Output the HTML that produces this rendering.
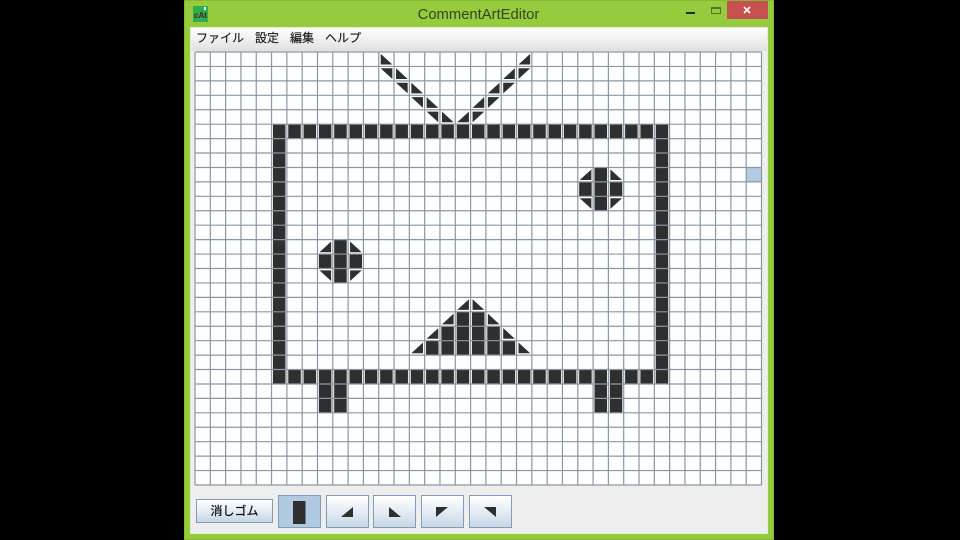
<!DOCTYPE html>
<html lang="ja">
<head>
<meta charset="utf-8">
<title>CommentArtEditor</title>
<style>
html,body{margin:0;padding:0;background:#000;width:960px;height:540px;overflow:hidden}
body{position:relative;font-family:"Liberation Sans","Noto Sans CJK JP",sans-serif}
.abs,.win,.client,.menu,.m,.btn,.title{position:absolute}
.win{left:184px;top:0;width:590px;height:540px;background:#95cb3d;box-sizing:border-box;border:1px solid #86b838}
.title{left:184px;width:589px;top:7px;text-align:center;font-size:14.8px;line-height:17px;color:#36452a}
.client{left:191px;top:28px;width:576px;height:505px;background:#eeeeee;outline:1px solid #e2eed0}
.menu{left:191px;top:28px;width:576px;height:23px;background:linear-gradient(#ffffff,#e0e0e0)}
.m{top:29.500px;font-size:12px;line-height:16px;color:#1a1a1a;white-space:nowrap;-webkit-text-stroke:.15px #1a1a1a}
.btn{box-sizing:border-box;border:1px solid #7f9db9;background:linear-gradient(#ffffff,#dfe8f2 60%,#c6d5e5)}
.sel{background:#b2c9e2}
</style>
</head>
<body>
<div class="win"></div>
<svg class="abs" style="left:193px;top:6px" width="15" height="16" viewBox="0 0 15 16">
<rect width="15" height="16" fill="#2fae4e"/>
<text x="1" y="12" font-family="Liberation Sans" font-size="8" font-weight="bold" fill="#5a1c1c">cAt</text>
<rect x="11" y="1" width="2" height="3" fill="#fff"/>
</svg>
<div class="title">CommentArtEditor</div>
<div class="abs" style="left:686px;top:12px;width:9px;height:2px;background:#1f2a18"></div>
<div class="abs" style="left:711px;top:7px;width:8px;height:4px;border:1px solid #54762a;border-top-width:2px"></div>
<div class="abs" style="left:727px;top:1px;width:41px;height:18px;background:#c75050"></div>
<svg class="abs" style="left:727px;top:1px" width="41" height="18" viewBox="0 0 41 18"><path d="M17 6l6 6M23 6l-6 6" stroke="#fff" stroke-width="1.700" fill="none"/></svg>

<div class="client"></div>
<div class="menu"></div>
<div class="m" style="left:196px">ファイル</div>
<div class="m" style="left:255px">設定</div>
<div class="m" style="left:290px">編集</div>
<div class="m" style="left:325px">ヘルプ</div>

<svg class="abs" style="left:195.3px;top:52.3px;overflow:visible" width="566.5" height="433" viewBox="0 0 37 30" preserveAspectRatio="none">
<rect width="37" height="30" fill="#fff"/>
<rect x="36" y="8" width="1" height="1" fill="#b3cbe4"/>
<g fill="#2f2f2f">
<!-- frame -->
<path d="M5 5h26v1H5zM5 6h1v17H5zM30 6h1v17h-1zM5 22h26v1H5zM8 23h2v2H8zM26 23h2v2h-2z"/>
<!-- eyes -->
<path d="M26 8h1v3h-1zM25 9h3v1h-3zM9 13h1v3H9zM8 14h3v1H8z"/>
<!-- mouth -->
<path d="M17 18h2v3h-2zM16 19h1v2h-1zM19 19h1v2h-1zM15 20h1v1h-1zM20 20h1v1h-1z"/>
</g>
<!-- white gap beside vertical lines across filled cells -->
<path fill="none" stroke="#ffffff" stroke-width="2.800" vector-effect="non-scaling-stroke" d="M5 5V25M6 5V25M7 5V25M8 5V25M9 5V25M10 5V25M11 5V25M12 0V25M13 0V25M14 0V25M15 0V25M16 0V25M17 0V25M18 0V25M19 0V25M20 0V25M21 0V25M22 0V25M23 5V25M24 5V25M25 5V25M26 5V25M27 5V25M28 5V25M29 5V25M30 5V25M31 5V25"/>
<g fill="#2f2f2f">
<!-- lower-left triangles -->
<path d="M12.13 .13v.74h.76zM13.13 1.13v.74h.76zM14.13 2.13v.74h.76zM15.13 3.13v.74h.76zM16.13 4.13v.74h.76zM27.13 8.13v.74h.76zM10.13 13.13v.74h.76zM18.13 17.13v.74h.76zM19.13 18.13v.74h.76zM20.13 19.13v.74h.76zM21.13 20.13v.74h.76z"/>
<!-- lower-right triangles -->
<path d="M21.89 .13v.74h-.76zM20.89 1.13v.74h-.76zM19.89 2.13v.74h-.76zM18.89 3.13v.74h-.76zM17.89 4.13v.74h-.76zM25.89 8.13v.74h-.76zM8.89 13.13v.74h-.76zM17.89 17.13v.74h-.76zM16.89 18.13v.74h-.76zM15.89 19.13v.74h-.76zM14.89 20.13v.74h-.76z"/>
<!-- upper-right triangles -->
<path d="M12.13 1.13h.76v.74zM13.13 2.13h.76v.74zM14.13 3.13h.76v.74zM15.13 4.13h.76v.74zM25.13 10.13h.76v.74zM8.13 15.13h.76v.74z"/>
<!-- upper-left triangles -->
<path d="M21.13 1.13h.76l-.76 .74zM20.13 2.13h.76l-.76 .74zM19.13 3.13h.76l-.76 .74zM18.13 4.13h.76l-.76 .74zM27.13 10.13h.76l-.76 .74zM10.13 15.13h.76l-.76 .74z"/>
</g>
<path fill="none" stroke="#8997a4" stroke-width="1.200" vector-effect="non-scaling-stroke" d="M0 0V30M1 0V30M2 0V30M3 0V30M4 0V30M5 0V30M6 0V30M7 0V30M8 0V30M9 0V30M10 0V30M11 0V30M12 0V30M13 0V30M14 0V30M15 0V30M16 0V30M17 0V30M18 0V30M19 0V30M20 0V30M21 0V30M22 0V30M23 0V30M24 0V30M25 0V30M26 0V30M27 0V30M28 0V30M29 0V30M30 0V30M31 0V30M32 0V30M33 0V30M34 0V30M35 0V30M36 0V30M37 0V30M0 0H37M0 1H37M0 2H37M0 3H37M0 4H37M0 5H37M0 6H37M0 7H37M0 8H37M0 9H37M0 10H37M0 11H37M0 12H37M0 13H37M0 14H37M0 15H37M0 16H37M0 17H37M0 18H37M0 19H37M0 20H37M0 21H37M0 22H37M0 23H37M0 24H37M0 25H37M0 26H37M0 27H37M0 28H37M0 29H37M0 30H37"/>
</svg>

<div class="btn" style="left:196px;top:499px;width:77px;height:24px;text-align:center;font-size:12px;line-height:23px;color:#111;-webkit-text-stroke:.25px #111">消しゴム</div>
<div class="btn sel" style="left:278px;top:495px;width:43px;height:33px"></div>
<div class="btn" style="left:326px;top:495px;width:43px;height:33px"></div>
<div class="btn" style="left:373px;top:495px;width:43px;height:33px"></div>
<div class="btn" style="left:421px;top:495px;width:43px;height:33px"></div>
<div class="btn" style="left:469px;top:495px;width:43px;height:33px"></div>
<svg class="abs" style="left:0;top:490px" width="960" height="50" viewBox="0 490 960 50" fill="#2f2f2f">
<rect x="293" y="501" width="12.5" height="23"/>
<path d="M353 507v10h-12zM389 507v10h12zM436 507h12l-12 10zM484 507h12v10z"/>
</svg>
</body>
</html>
